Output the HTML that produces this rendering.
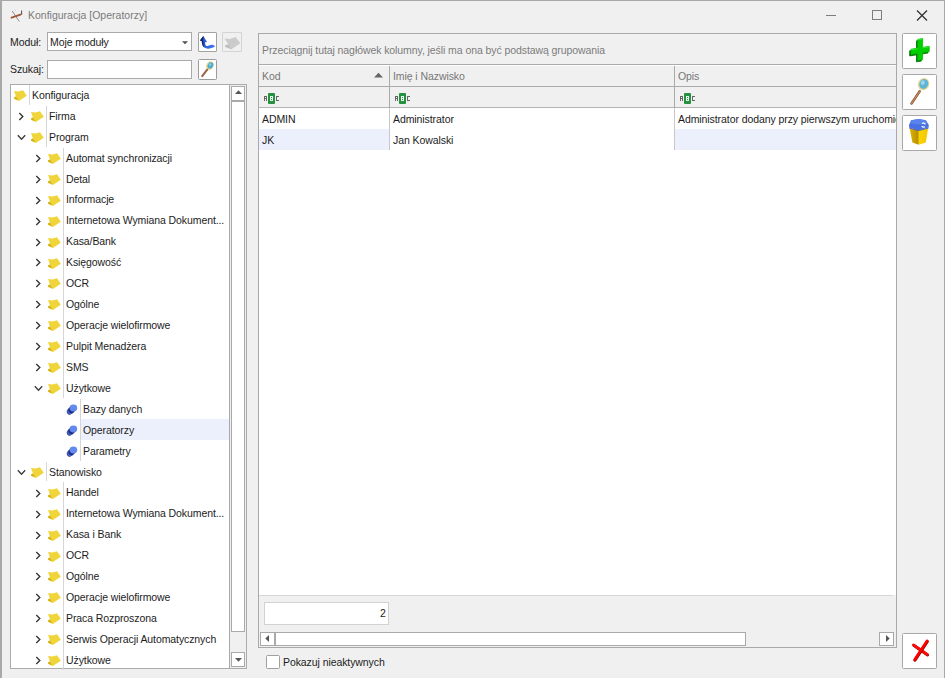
<!DOCTYPE html>
<html><head><meta charset="utf-8">
<style>
*{box-sizing:border-box}
html,body{margin:0;padding:0;width:945px;height:678px;overflow:hidden;background:#f0f0f0}
body{position:relative;font-family:"Liberation Sans",sans-serif;font-size:10.5px;color:#1c1c1c}
.abs{position:absolute}
.abs svg{display:block}
.tt{position:absolute;height:21px;line-height:21px;white-space:nowrap;color:#1c1c1c;letter-spacing:-0.09px}
.vl{position:absolute;width:1px;background:#d6d6d6}
.sel{position:absolute;width:148px;height:21px;background:#ebf0fc}
.lbl{position:absolute;white-space:nowrap;line-height:14px;letter-spacing:-0.08px}
.box{position:absolute;background:#fff;border:1px solid #a9a9a9}
.btn{position:absolute;background:#fff;border:1px solid #a8a8a8;border-radius:1.5px}
</style></head><body>
<!-- window borders -->
<div class="abs" style="left:0;top:0;width:945px;height:1px;background:#a7a7a7"></div>
<div class="abs" style="left:0;top:0;width:2px;height:678px;background:#a9a9a9"></div>
<div class="abs" style="left:944px;top:0;width:1px;height:678px;background:#a9a9a9"></div>

<!-- title -->
<div class="abs" style="left:9px;top:7px"><svg width="16" height="17" viewBox="0 0 16 17"><path d="M3.2 4 L10.3 14.5" stroke="#8c8c8c" stroke-width="1"/><path d="M2.6 10.6 L11.4 7.6" stroke="#9e5a36" stroke-width="2" stroke-linecap="round"/><path d="M12.6 3.6 L12.6 7.8" stroke="#5a5a5a" stroke-width="1.1"/><path d="M5.8 2.8 L6.4 3.4" stroke="#a0a0a0" stroke-width="1"/></svg></div>
<div class="lbl" style="left:28px;top:8px;color:#7b7b7b;letter-spacing:0">Konfiguracja [Operatorzy]</div>
<div class="abs" style="left:826px;top:15px;width:10px;height:1px;background:#7c7c7c"></div>
<div class="abs" style="left:872px;top:10px;width:9.5px;height:10px;border:1px solid #7c7c7c;border-radius:0.5px"></div>
<div class="abs" style="left:916px;top:10px"><svg width="12" height="11" viewBox="0 0 12 11"><path d="M1 0.5 L11 10.5 M11 0.5 L1 10.5" stroke="#2e2e2e" stroke-width="1.2"/></svg></div>

<!-- module / search -->
<div class="lbl" style="left:10px;top:35px;color:#1c1c1c">Moduł:</div>
<div class="box" style="left:47px;top:32px;width:145px;height:19px"></div>
<div class="lbl" style="left:50px;top:35px">Moje moduły</div>
<div class="abs" style="left:182px;top:41px"><svg width="6" height="4" viewBox="0 0 6 4"><path d="M0 0.3 L6 0.3 L3 3.3 Z" fill="#505050"/></svg></div>
<div class="btn" style="left:198px;top:32px;width:19px;height:20px;border-color:#a2a2a2;border-radius:1px"></div>
<div class="abs" style="left:198px;top:33px"><svg width="19" height="19" viewBox="0 0 19 19"><defs><linearGradient id="ga" x1="0" y1="0" x2="1" y2="0"><stop offset="0" stop-color="#10267a"/><stop offset="0.35" stop-color="#2f66e0"/><stop offset="1" stop-color="#3f78f0"/></linearGradient></defs><path d="M5.3 2.9 L1.9 7.6 L3.7 8.1 C3.9 11 4.6 13.6 6.4 14.6 C7.8 15.6 9.6 15.9 11.2 15.5 C13.4 15 15.4 14.4 17 13.4 C16.2 12 14.6 11.5 13.2 11.8 C11.4 12.3 9.8 13.2 8.6 13.1 C7.6 12.8 7.2 11.2 7.0 9.0 L9.2 9.3 Z" fill="url(#ga)"/><path d="M5.3 2.9 L1.9 7.6 L3.7 8.1 C3.9 11 4.6 13.6 6.4 14.6 C5.6 13 5.3 11 5.3 8.6 L4.6 7.4 L5.6 3.4 Z" fill="#0a1650" opacity="0.7"/></svg></div>
<div class="btn" style="left:222px;top:32px;width:20px;height:20px;background:#f0f0f0;border-color:#d4d4d4;border-radius:1px"></div>
<div class="abs" style="left:222px;top:32px"><svg width="20" height="20" viewBox="0 0 17 15"><path d="M2.2 4.6 L6.8 5.0 L11.6 3.3 L15.6 8.6 L8.0 13.6 L2.6 11.6 L2.8 10.2 L5.4 9.6 Z" fill="#cbcbcb"/><path d="M2.8 10.2 L5.4 9.6 L8.0 13.6 L2.6 11.6 Z" fill="#bfbfbf"/></svg></div>

<div class="lbl" style="left:10px;top:62px;color:#1c1c1c">Szukaj:</div>
<div class="box" style="left:47px;top:60px;width:145px;height:19px"></div>
<div class="btn" style="left:198px;top:59px;width:19px;height:21px;border-color:#9c9c9c"></div>
<div class="abs" style="left:200px;top:61px"><svg width="16" height="17" viewBox="0 0 16 17"><path d="M2.2 15.2 L7.6 8.2" stroke="#9c5e3c" stroke-width="1.9" stroke-linecap="round"/><ellipse cx="10" cy="4.5" rx="3.5" ry="4.2" transform="rotate(28 10 4.5)" fill="#e2cf82"/><ellipse cx="10.5" cy="4.4" rx="2.6" ry="3.3" transform="rotate(28 10.5 4.4)" fill="#48acd6"/><ellipse cx="10.2" cy="3.6" rx="1.1" ry="1.5" transform="rotate(28 10.2 3.6)" fill="#8ccfe8"/></svg></div>

<!-- tree -->
<div class="box" style="left:10px;top:84px;width:237px;height:585px;border-color:#ababab"></div>
<div class="abs" style="left:11.0px;top:87.07px"><svg class="ic" width="17" height="15" viewBox="0 0 17 15"><path d="M3.0 4.0 L7.5 4.6 L12.0 3.3 L15.8 8.7 L7.9 13.9 L3.1 11.8 L3.2 10.2 L5.0 9.6 Z" fill="#f0d53a"/><path d="M3.2 10.2 L5.0 9.6 L7.4 13.6 L3.1 11.8 Z" fill="#d2b31e"/></svg></div>
<div class="tt" style="left:32px;top:84.80px">Konfiguracja</div>
<div class="abs" style="left:17.5px;top:111.93px"><svg class="ex" width="7" height="9" viewBox="0 0 7 9"><path d="M1.3 1.1 L4.8 4.5 L1.3 7.9" fill="none" stroke="#383838" stroke-width="1.4"/></svg></div>
<div class="abs" style="left:28.0px;top:108.00px"><svg class="ic" width="17" height="15" viewBox="0 0 17 15"><path d="M3.0 4.0 L7.5 4.6 L12.0 3.3 L15.8 8.7 L7.9 13.9 L3.1 11.8 L3.2 10.2 L5.0 9.6 Z" fill="#f0d53a"/><path d="M3.2 10.2 L5.0 9.6 L7.4 13.6 L3.1 11.8 Z" fill="#d2b31e"/></svg></div>
<div class="tt" style="left:49px;top:105.73px">Firma</div>
<div class="abs" style="left:17.0px;top:133.86px"><svg class="ex" width="9" height="7" viewBox="0 0 9 7"><path d="M0.8 1.2 L4.5 5.2 L8.2 1.2" fill="none" stroke="#3c3c3c" stroke-width="1.35"/></svg></div>
<div class="abs" style="left:28.0px;top:128.93px"><svg class="ic" width="17" height="15" viewBox="0 0 17 15"><path d="M3.0 4.0 L7.5 4.6 L12.0 3.3 L15.8 8.7 L7.9 13.9 L3.1 11.8 L3.2 10.2 L5.0 9.6 Z" fill="#f0d53a"/><path d="M3.2 10.2 L5.0 9.6 L7.4 13.6 L3.1 11.8 Z" fill="#d2b31e"/></svg></div>
<div class="tt" style="left:49px;top:126.66px">Program</div>
<div class="abs" style="left:34.5px;top:153.79px"><svg class="ex" width="7" height="9" viewBox="0 0 7 9"><path d="M1.3 1.1 L4.8 4.5 L1.3 7.9" fill="none" stroke="#383838" stroke-width="1.4"/></svg></div>
<div class="abs" style="left:45.0px;top:149.86px"><svg class="ic" width="17" height="15" viewBox="0 0 17 15"><path d="M3.0 4.0 L7.5 4.6 L12.0 3.3 L15.8 8.7 L7.9 13.9 L3.1 11.8 L3.2 10.2 L5.0 9.6 Z" fill="#f0d53a"/><path d="M3.2 10.2 L5.0 9.6 L7.4 13.6 L3.1 11.8 Z" fill="#d2b31e"/></svg></div>
<div class="tt" style="left:66px;top:147.59px">Automat synchronizacji</div>
<div class="abs" style="left:34.5px;top:174.72px"><svg class="ex" width="7" height="9" viewBox="0 0 7 9"><path d="M1.3 1.1 L4.8 4.5 L1.3 7.9" fill="none" stroke="#383838" stroke-width="1.4"/></svg></div>
<div class="abs" style="left:45.0px;top:170.79px"><svg class="ic" width="17" height="15" viewBox="0 0 17 15"><path d="M3.0 4.0 L7.5 4.6 L12.0 3.3 L15.8 8.7 L7.9 13.9 L3.1 11.8 L3.2 10.2 L5.0 9.6 Z" fill="#f0d53a"/><path d="M3.2 10.2 L5.0 9.6 L7.4 13.6 L3.1 11.8 Z" fill="#d2b31e"/></svg></div>
<div class="tt" style="left:66px;top:168.52px">Detal</div>
<div class="abs" style="left:34.5px;top:195.65px"><svg class="ex" width="7" height="9" viewBox="0 0 7 9"><path d="M1.3 1.1 L4.8 4.5 L1.3 7.9" fill="none" stroke="#383838" stroke-width="1.4"/></svg></div>
<div class="abs" style="left:45.0px;top:191.72px"><svg class="ic" width="17" height="15" viewBox="0 0 17 15"><path d="M3.0 4.0 L7.5 4.6 L12.0 3.3 L15.8 8.7 L7.9 13.9 L3.1 11.8 L3.2 10.2 L5.0 9.6 Z" fill="#f0d53a"/><path d="M3.2 10.2 L5.0 9.6 L7.4 13.6 L3.1 11.8 Z" fill="#d2b31e"/></svg></div>
<div class="tt" style="left:66px;top:189.45px">Informacje</div>
<div class="abs" style="left:34.5px;top:216.58px"><svg class="ex" width="7" height="9" viewBox="0 0 7 9"><path d="M1.3 1.1 L4.8 4.5 L1.3 7.9" fill="none" stroke="#383838" stroke-width="1.4"/></svg></div>
<div class="abs" style="left:45.0px;top:212.65px"><svg class="ic" width="17" height="15" viewBox="0 0 17 15"><path d="M3.0 4.0 L7.5 4.6 L12.0 3.3 L15.8 8.7 L7.9 13.9 L3.1 11.8 L3.2 10.2 L5.0 9.6 Z" fill="#f0d53a"/><path d="M3.2 10.2 L5.0 9.6 L7.4 13.6 L3.1 11.8 Z" fill="#d2b31e"/></svg></div>
<div class="tt" style="left:66px;top:210.38px">Internetowa Wymiana Dokument...</div>
<div class="abs" style="left:34.5px;top:237.51px"><svg class="ex" width="7" height="9" viewBox="0 0 7 9"><path d="M1.3 1.1 L4.8 4.5 L1.3 7.9" fill="none" stroke="#383838" stroke-width="1.4"/></svg></div>
<div class="abs" style="left:45.0px;top:233.58px"><svg class="ic" width="17" height="15" viewBox="0 0 17 15"><path d="M3.0 4.0 L7.5 4.6 L12.0 3.3 L15.8 8.7 L7.9 13.9 L3.1 11.8 L3.2 10.2 L5.0 9.6 Z" fill="#f0d53a"/><path d="M3.2 10.2 L5.0 9.6 L7.4 13.6 L3.1 11.8 Z" fill="#d2b31e"/></svg></div>
<div class="tt" style="left:66px;top:231.31px">Kasa/Bank</div>
<div class="abs" style="left:34.5px;top:258.44px"><svg class="ex" width="7" height="9" viewBox="0 0 7 9"><path d="M1.3 1.1 L4.8 4.5 L1.3 7.9" fill="none" stroke="#383838" stroke-width="1.4"/></svg></div>
<div class="abs" style="left:45.0px;top:254.51px"><svg class="ic" width="17" height="15" viewBox="0 0 17 15"><path d="M3.0 4.0 L7.5 4.6 L12.0 3.3 L15.8 8.7 L7.9 13.9 L3.1 11.8 L3.2 10.2 L5.0 9.6 Z" fill="#f0d53a"/><path d="M3.2 10.2 L5.0 9.6 L7.4 13.6 L3.1 11.8 Z" fill="#d2b31e"/></svg></div>
<div class="tt" style="left:66px;top:252.24px">Księgowość</div>
<div class="abs" style="left:34.5px;top:279.37px"><svg class="ex" width="7" height="9" viewBox="0 0 7 9"><path d="M1.3 1.1 L4.8 4.5 L1.3 7.9" fill="none" stroke="#383838" stroke-width="1.4"/></svg></div>
<div class="abs" style="left:45.0px;top:275.44px"><svg class="ic" width="17" height="15" viewBox="0 0 17 15"><path d="M3.0 4.0 L7.5 4.6 L12.0 3.3 L15.8 8.7 L7.9 13.9 L3.1 11.8 L3.2 10.2 L5.0 9.6 Z" fill="#f0d53a"/><path d="M3.2 10.2 L5.0 9.6 L7.4 13.6 L3.1 11.8 Z" fill="#d2b31e"/></svg></div>
<div class="tt" style="left:66px;top:273.17px">OCR</div>
<div class="abs" style="left:34.5px;top:300.30px"><svg class="ex" width="7" height="9" viewBox="0 0 7 9"><path d="M1.3 1.1 L4.8 4.5 L1.3 7.9" fill="none" stroke="#383838" stroke-width="1.4"/></svg></div>
<div class="abs" style="left:45.0px;top:296.37px"><svg class="ic" width="17" height="15" viewBox="0 0 17 15"><path d="M3.0 4.0 L7.5 4.6 L12.0 3.3 L15.8 8.7 L7.9 13.9 L3.1 11.8 L3.2 10.2 L5.0 9.6 Z" fill="#f0d53a"/><path d="M3.2 10.2 L5.0 9.6 L7.4 13.6 L3.1 11.8 Z" fill="#d2b31e"/></svg></div>
<div class="tt" style="left:66px;top:294.10px">Ogólne</div>
<div class="abs" style="left:34.5px;top:321.23px"><svg class="ex" width="7" height="9" viewBox="0 0 7 9"><path d="M1.3 1.1 L4.8 4.5 L1.3 7.9" fill="none" stroke="#383838" stroke-width="1.4"/></svg></div>
<div class="abs" style="left:45.0px;top:317.30px"><svg class="ic" width="17" height="15" viewBox="0 0 17 15"><path d="M3.0 4.0 L7.5 4.6 L12.0 3.3 L15.8 8.7 L7.9 13.9 L3.1 11.8 L3.2 10.2 L5.0 9.6 Z" fill="#f0d53a"/><path d="M3.2 10.2 L5.0 9.6 L7.4 13.6 L3.1 11.8 Z" fill="#d2b31e"/></svg></div>
<div class="tt" style="left:66px;top:315.03px">Operacje wielofirmowe</div>
<div class="abs" style="left:34.5px;top:342.16px"><svg class="ex" width="7" height="9" viewBox="0 0 7 9"><path d="M1.3 1.1 L4.8 4.5 L1.3 7.9" fill="none" stroke="#383838" stroke-width="1.4"/></svg></div>
<div class="abs" style="left:45.0px;top:338.23px"><svg class="ic" width="17" height="15" viewBox="0 0 17 15"><path d="M3.0 4.0 L7.5 4.6 L12.0 3.3 L15.8 8.7 L7.9 13.9 L3.1 11.8 L3.2 10.2 L5.0 9.6 Z" fill="#f0d53a"/><path d="M3.2 10.2 L5.0 9.6 L7.4 13.6 L3.1 11.8 Z" fill="#d2b31e"/></svg></div>
<div class="tt" style="left:66px;top:335.96px">Pulpit Menadżera</div>
<div class="abs" style="left:34.5px;top:363.09px"><svg class="ex" width="7" height="9" viewBox="0 0 7 9"><path d="M1.3 1.1 L4.8 4.5 L1.3 7.9" fill="none" stroke="#383838" stroke-width="1.4"/></svg></div>
<div class="abs" style="left:45.0px;top:359.16px"><svg class="ic" width="17" height="15" viewBox="0 0 17 15"><path d="M3.0 4.0 L7.5 4.6 L12.0 3.3 L15.8 8.7 L7.9 13.9 L3.1 11.8 L3.2 10.2 L5.0 9.6 Z" fill="#f0d53a"/><path d="M3.2 10.2 L5.0 9.6 L7.4 13.6 L3.1 11.8 Z" fill="#d2b31e"/></svg></div>
<div class="tt" style="left:66px;top:356.89px">SMS</div>
<div class="abs" style="left:34.0px;top:385.02px"><svg class="ex" width="9" height="7" viewBox="0 0 9 7"><path d="M0.8 1.2 L4.5 5.2 L8.2 1.2" fill="none" stroke="#3c3c3c" stroke-width="1.35"/></svg></div>
<div class="abs" style="left:45.0px;top:380.09px"><svg class="ic" width="17" height="15" viewBox="0 0 17 15"><path d="M3.0 4.0 L7.5 4.6 L12.0 3.3 L15.8 8.7 L7.9 13.9 L3.1 11.8 L3.2 10.2 L5.0 9.6 Z" fill="#f0d53a"/><path d="M3.2 10.2 L5.0 9.6 L7.4 13.6 L3.1 11.8 Z" fill="#d2b31e"/></svg></div>
<div class="tt" style="left:66px;top:377.82px">Użytkowe</div>
<div class="abs" style="left:64.0px;top:398.95px"><svg class="ic" width="16" height="17" viewBox="0 0 16 17"><ellipse cx="6.4" cy="12.2" rx="3.8" ry="3.0" transform="rotate(-38 6.4 12.2)" fill="#13206a"/><ellipse cx="6.9" cy="11.6" rx="3.9" ry="3.1" transform="rotate(-38 6.9 11.6)" fill="#4a6ad8"/><ellipse cx="8.0" cy="10.5" rx="3.9" ry="3.2" transform="rotate(-38 8.0 10.5)" fill="#1f2e80"/><ellipse cx="9.4" cy="9.0" rx="3.8" ry="3.4" fill="#6388ee"/></svg></div>
<div class="tt" style="left:83px;top:398.75px">Bazy danych</div>
<div class="sel" style="top:419.08px;left:81px"></div>
<div class="abs" style="left:64.0px;top:419.88px"><svg class="ic" width="16" height="17" viewBox="0 0 16 17"><ellipse cx="6.4" cy="12.2" rx="3.8" ry="3.0" transform="rotate(-38 6.4 12.2)" fill="#13206a"/><ellipse cx="6.9" cy="11.6" rx="3.9" ry="3.1" transform="rotate(-38 6.9 11.6)" fill="#4a6ad8"/><ellipse cx="8.0" cy="10.5" rx="3.9" ry="3.2" transform="rotate(-38 8.0 10.5)" fill="#1f2e80"/><ellipse cx="9.4" cy="9.0" rx="3.8" ry="3.4" fill="#6388ee"/></svg></div>
<div class="tt" style="left:83px;top:419.68px">Operatorzy</div>
<div class="abs" style="left:64.0px;top:440.81px"><svg class="ic" width="16" height="17" viewBox="0 0 16 17"><ellipse cx="6.4" cy="12.2" rx="3.8" ry="3.0" transform="rotate(-38 6.4 12.2)" fill="#13206a"/><ellipse cx="6.9" cy="11.6" rx="3.9" ry="3.1" transform="rotate(-38 6.9 11.6)" fill="#4a6ad8"/><ellipse cx="8.0" cy="10.5" rx="3.9" ry="3.2" transform="rotate(-38 8.0 10.5)" fill="#1f2e80"/><ellipse cx="9.4" cy="9.0" rx="3.8" ry="3.4" fill="#6388ee"/></svg></div>
<div class="tt" style="left:83px;top:440.61px">Parametry</div>
<div class="abs" style="left:17.0px;top:468.74px"><svg class="ex" width="9" height="7" viewBox="0 0 9 7"><path d="M0.8 1.2 L4.5 5.2 L8.2 1.2" fill="none" stroke="#3c3c3c" stroke-width="1.35"/></svg></div>
<div class="abs" style="left:28.0px;top:463.81px"><svg class="ic" width="17" height="15" viewBox="0 0 17 15"><path d="M3.0 4.0 L7.5 4.6 L12.0 3.3 L15.8 8.7 L7.9 13.9 L3.1 11.8 L3.2 10.2 L5.0 9.6 Z" fill="#f0d53a"/><path d="M3.2 10.2 L5.0 9.6 L7.4 13.6 L3.1 11.8 Z" fill="#d2b31e"/></svg></div>
<div class="tt" style="left:49px;top:461.54px">Stanowisko</div>
<div class="abs" style="left:34.5px;top:488.67px"><svg class="ex" width="7" height="9" viewBox="0 0 7 9"><path d="M1.3 1.1 L4.8 4.5 L1.3 7.9" fill="none" stroke="#383838" stroke-width="1.4"/></svg></div>
<div class="abs" style="left:45.0px;top:484.74px"><svg class="ic" width="17" height="15" viewBox="0 0 17 15"><path d="M3.0 4.0 L7.5 4.6 L12.0 3.3 L15.8 8.7 L7.9 13.9 L3.1 11.8 L3.2 10.2 L5.0 9.6 Z" fill="#f0d53a"/><path d="M3.2 10.2 L5.0 9.6 L7.4 13.6 L3.1 11.8 Z" fill="#d2b31e"/></svg></div>
<div class="tt" style="left:66px;top:482.47px">Handel</div>
<div class="abs" style="left:34.5px;top:509.60px"><svg class="ex" width="7" height="9" viewBox="0 0 7 9"><path d="M1.3 1.1 L4.8 4.5 L1.3 7.9" fill="none" stroke="#383838" stroke-width="1.4"/></svg></div>
<div class="abs" style="left:45.0px;top:505.67px"><svg class="ic" width="17" height="15" viewBox="0 0 17 15"><path d="M3.0 4.0 L7.5 4.6 L12.0 3.3 L15.8 8.7 L7.9 13.9 L3.1 11.8 L3.2 10.2 L5.0 9.6 Z" fill="#f0d53a"/><path d="M3.2 10.2 L5.0 9.6 L7.4 13.6 L3.1 11.8 Z" fill="#d2b31e"/></svg></div>
<div class="tt" style="left:66px;top:503.40px">Internetowa Wymiana Dokument...</div>
<div class="abs" style="left:34.5px;top:530.53px"><svg class="ex" width="7" height="9" viewBox="0 0 7 9"><path d="M1.3 1.1 L4.8 4.5 L1.3 7.9" fill="none" stroke="#383838" stroke-width="1.4"/></svg></div>
<div class="abs" style="left:45.0px;top:526.60px"><svg class="ic" width="17" height="15" viewBox="0 0 17 15"><path d="M3.0 4.0 L7.5 4.6 L12.0 3.3 L15.8 8.7 L7.9 13.9 L3.1 11.8 L3.2 10.2 L5.0 9.6 Z" fill="#f0d53a"/><path d="M3.2 10.2 L5.0 9.6 L7.4 13.6 L3.1 11.8 Z" fill="#d2b31e"/></svg></div>
<div class="tt" style="left:66px;top:524.33px">Kasa i Bank</div>
<div class="abs" style="left:34.5px;top:551.46px"><svg class="ex" width="7" height="9" viewBox="0 0 7 9"><path d="M1.3 1.1 L4.8 4.5 L1.3 7.9" fill="none" stroke="#383838" stroke-width="1.4"/></svg></div>
<div class="abs" style="left:45.0px;top:547.53px"><svg class="ic" width="17" height="15" viewBox="0 0 17 15"><path d="M3.0 4.0 L7.5 4.6 L12.0 3.3 L15.8 8.7 L7.9 13.9 L3.1 11.8 L3.2 10.2 L5.0 9.6 Z" fill="#f0d53a"/><path d="M3.2 10.2 L5.0 9.6 L7.4 13.6 L3.1 11.8 Z" fill="#d2b31e"/></svg></div>
<div class="tt" style="left:66px;top:545.26px">OCR</div>
<div class="abs" style="left:34.5px;top:572.39px"><svg class="ex" width="7" height="9" viewBox="0 0 7 9"><path d="M1.3 1.1 L4.8 4.5 L1.3 7.9" fill="none" stroke="#383838" stroke-width="1.4"/></svg></div>
<div class="abs" style="left:45.0px;top:568.46px"><svg class="ic" width="17" height="15" viewBox="0 0 17 15"><path d="M3.0 4.0 L7.5 4.6 L12.0 3.3 L15.8 8.7 L7.9 13.9 L3.1 11.8 L3.2 10.2 L5.0 9.6 Z" fill="#f0d53a"/><path d="M3.2 10.2 L5.0 9.6 L7.4 13.6 L3.1 11.8 Z" fill="#d2b31e"/></svg></div>
<div class="tt" style="left:66px;top:566.19px">Ogólne</div>
<div class="abs" style="left:34.5px;top:593.32px"><svg class="ex" width="7" height="9" viewBox="0 0 7 9"><path d="M1.3 1.1 L4.8 4.5 L1.3 7.9" fill="none" stroke="#383838" stroke-width="1.4"/></svg></div>
<div class="abs" style="left:45.0px;top:589.39px"><svg class="ic" width="17" height="15" viewBox="0 0 17 15"><path d="M3.0 4.0 L7.5 4.6 L12.0 3.3 L15.8 8.7 L7.9 13.9 L3.1 11.8 L3.2 10.2 L5.0 9.6 Z" fill="#f0d53a"/><path d="M3.2 10.2 L5.0 9.6 L7.4 13.6 L3.1 11.8 Z" fill="#d2b31e"/></svg></div>
<div class="tt" style="left:66px;top:587.12px">Operacje wielofirmowe</div>
<div class="abs" style="left:34.5px;top:614.25px"><svg class="ex" width="7" height="9" viewBox="0 0 7 9"><path d="M1.3 1.1 L4.8 4.5 L1.3 7.9" fill="none" stroke="#383838" stroke-width="1.4"/></svg></div>
<div class="abs" style="left:45.0px;top:610.32px"><svg class="ic" width="17" height="15" viewBox="0 0 17 15"><path d="M3.0 4.0 L7.5 4.6 L12.0 3.3 L15.8 8.7 L7.9 13.9 L3.1 11.8 L3.2 10.2 L5.0 9.6 Z" fill="#f0d53a"/><path d="M3.2 10.2 L5.0 9.6 L7.4 13.6 L3.1 11.8 Z" fill="#d2b31e"/></svg></div>
<div class="tt" style="left:66px;top:608.05px">Praca Rozproszona</div>
<div class="abs" style="left:34.5px;top:635.18px"><svg class="ex" width="7" height="9" viewBox="0 0 7 9"><path d="M1.3 1.1 L4.8 4.5 L1.3 7.9" fill="none" stroke="#383838" stroke-width="1.4"/></svg></div>
<div class="abs" style="left:45.0px;top:631.25px"><svg class="ic" width="17" height="15" viewBox="0 0 17 15"><path d="M3.0 4.0 L7.5 4.6 L12.0 3.3 L15.8 8.7 L7.9 13.9 L3.1 11.8 L3.2 10.2 L5.0 9.6 Z" fill="#f0d53a"/><path d="M3.2 10.2 L5.0 9.6 L7.4 13.6 L3.1 11.8 Z" fill="#d2b31e"/></svg></div>
<div class="tt" style="left:66px;top:628.98px">Serwis Operacji Automatycznych</div>
<div class="abs" style="left:34.5px;top:656.11px"><svg class="ex" width="7" height="9" viewBox="0 0 7 9"><path d="M1.3 1.1 L4.8 4.5 L1.3 7.9" fill="none" stroke="#383838" stroke-width="1.4"/></svg></div>
<div class="abs" style="left:45.0px;top:652.18px"><svg class="ic" width="17" height="15" viewBox="0 0 17 15"><path d="M3.0 4.0 L7.5 4.6 L12.0 3.3 L15.8 8.7 L7.9 13.9 L3.1 11.8 L3.2 10.2 L5.0 9.6 Z" fill="#f0d53a"/><path d="M3.2 10.2 L5.0 9.6 L7.4 13.6 L3.1 11.8 Z" fill="#d2b31e"/></svg></div>
<div class="tt" style="left:66px;top:649.91px">Użytkowe</div>
<div class="vl" style="left:29px;top:84.80px;height:19.93px"></div>
<div class="vl" style="left:46px;top:105.73px;height:40.86px"></div>
<div class="vl" style="left:63px;top:147.59px;height:250.16px"></div>
<div class="vl" style="left:80px;top:398.75px;height:61.79px"></div>
<div class="vl" style="left:46px;top:461.54px;height:19.93px"></div>
<div class="vl" style="left:63px;top:482.47px;height:187.37px"></div>
<!-- tree scrollbar -->
<div class="abs" style="left:229px;top:85px;width:17px;height:583px;background:#f0f0f0;border-left:1px solid #a9a9a9"></div>
<div class="abs" style="left:231px;top:86px;width:14px;height:15px;background:#fff;border:1px solid #a9a9a9"></div>
<div class="abs" style="left:235px;top:90px"><svg width="7" height="4" viewBox="0 0 7 4"><path d="M0 4 L7 4 L3.5 0.3 Z" fill="#555"/></svg></div>
<div class="abs" style="left:231px;top:101px;width:14px;height:531px;background:#fff;border:1px solid #a9a9a9"></div>
<div class="abs" style="left:231px;top:652px;width:14px;height:15px;background:#fff;border:1px solid #a9a9a9"></div>
<div class="abs" style="left:235px;top:658px"><svg width="7" height="4" viewBox="0 0 7 4"><path d="M0 0 L7 0 L3.5 3.7 Z" fill="#555"/></svg></div>

<!-- grid -->
<div class="abs" style="left:258px;top:33px;width:639px;height:615px;border:1px solid #a9a9a9;background:#fff"></div>
<div class="abs" style="left:259px;top:34px;width:637px;height:31px;background:#f0f0f0;border-bottom:1px solid #aaaaaa"></div>
<div class="lbl" style="left:262px;top:43px;color:#7c7c7c">Przeciągnij tutaj nagłówek kolumny, jeśli ma ona być podstawą grupowania</div>

<!-- header row -->
<div class="abs" style="left:259px;top:66px;width:637px;height:21px;background:#f0f0f0;border-bottom:1px solid #aaaaaa"></div>
<div class="abs" style="left:389px;top:66px;width:1px;height:21px;background:#aaaaaa"></div>
<div class="abs" style="left:674px;top:66px;width:1px;height:21px;background:#aaaaaa"></div>
<div class="lbl" style="left:262px;top:69px;color:#767676">Kod</div>
<div class="abs" style="left:374px;top:72px"><svg width="9" height="6" viewBox="0 0 9 6"><path d="M0 5.6 L9 5.6 L4.5 0.7 Z" fill="#666"/></svg></div>
<div class="lbl" style="left:393px;top:69px;color:#767676">Imię i Nazwisko</div>
<div class="lbl" style="left:678px;top:69px;color:#767676">Opis</div>
<!-- filter row -->
<div class="abs" style="left:259px;top:87px;width:637px;height:21px;background:#f0f0f0;border-bottom:1px solid #b4b4b4"></div>
<div class="abs" style="left:389px;top:87px;width:1px;height:21px;background:#aaaaaa"></div>
<div class="abs" style="left:674px;top:87px;width:1px;height:21px;background:#aaaaaa"></div>
<div class="abs" style="left:263px;top:93px"><svg width="17" height="11" viewBox="0 0 17 11" shape-rendering="crispEdges"><rect x="1" y="3" width="1" height="1" fill="#666"/><rect x="2" y="3" width="1" height="1" fill="#666"/><rect x="3" y="3" width="1" height="1" fill="#666"/><rect x="1" y="4" width="1" height="1" fill="#666"/><rect x="3" y="4" width="1" height="1" fill="#666"/><rect x="1" y="5" width="1" height="1" fill="#666"/><rect x="2" y="5" width="1" height="1" fill="#666"/><rect x="3" y="5" width="1" height="1" fill="#666"/><rect x="1" y="6" width="1" height="1" fill="#666"/><rect x="3" y="6" width="1" height="1" fill="#666"/><rect x="1" y="7" width="1" height="1" fill="#666"/><rect x="3" y="7" width="1" height="1" fill="#666"/><rect x="5" y="0" width="7" height="11" rx="1" fill="#25923f" shape-rendering="auto"/><rect x="7" y="3" width="1" height="1" fill="#eef5ee"/><rect x="8" y="3" width="1" height="1" fill="#eef5ee"/><rect x="9" y="3" width="1" height="1" fill="#eef5ee"/><rect x="7" y="4" width="1" height="1" fill="#eef5ee"/><rect x="9" y="4" width="1" height="1" fill="#eef5ee"/><rect x="7" y="5" width="1" height="1" fill="#eef5ee"/><rect x="8" y="5" width="1" height="1" fill="#eef5ee"/><rect x="9" y="5" width="1" height="1" fill="#eef5ee"/><rect x="7" y="6" width="1" height="1" fill="#eef5ee"/><rect x="9" y="6" width="1" height="1" fill="#eef5ee"/><rect x="7" y="7" width="1" height="1" fill="#eef5ee"/><rect x="8" y="7" width="1" height="1" fill="#eef5ee"/><rect x="9" y="7" width="1" height="1" fill="#eef5ee"/><rect x="13" y="3" width="1" height="1" fill="#666"/><rect x="14" y="3" width="1" height="1" fill="#666"/><rect x="15" y="3" width="1" height="1" fill="#666"/><rect x="13" y="4" width="1" height="1" fill="#666"/><rect x="13" y="5" width="1" height="1" fill="#666"/><rect x="13" y="6" width="1" height="1" fill="#666"/><rect x="13" y="7" width="1" height="1" fill="#666"/><rect x="14" y="7" width="1" height="1" fill="#666"/><rect x="15" y="7" width="1" height="1" fill="#666"/></svg></div><div class="abs" style="left:394px;top:93px"><svg width="17" height="11" viewBox="0 0 17 11" shape-rendering="crispEdges"><rect x="1" y="3" width="1" height="1" fill="#666"/><rect x="2" y="3" width="1" height="1" fill="#666"/><rect x="3" y="3" width="1" height="1" fill="#666"/><rect x="1" y="4" width="1" height="1" fill="#666"/><rect x="3" y="4" width="1" height="1" fill="#666"/><rect x="1" y="5" width="1" height="1" fill="#666"/><rect x="2" y="5" width="1" height="1" fill="#666"/><rect x="3" y="5" width="1" height="1" fill="#666"/><rect x="1" y="6" width="1" height="1" fill="#666"/><rect x="3" y="6" width="1" height="1" fill="#666"/><rect x="1" y="7" width="1" height="1" fill="#666"/><rect x="3" y="7" width="1" height="1" fill="#666"/><rect x="5" y="0" width="7" height="11" rx="1" fill="#25923f" shape-rendering="auto"/><rect x="7" y="3" width="1" height="1" fill="#eef5ee"/><rect x="8" y="3" width="1" height="1" fill="#eef5ee"/><rect x="9" y="3" width="1" height="1" fill="#eef5ee"/><rect x="7" y="4" width="1" height="1" fill="#eef5ee"/><rect x="9" y="4" width="1" height="1" fill="#eef5ee"/><rect x="7" y="5" width="1" height="1" fill="#eef5ee"/><rect x="8" y="5" width="1" height="1" fill="#eef5ee"/><rect x="9" y="5" width="1" height="1" fill="#eef5ee"/><rect x="7" y="6" width="1" height="1" fill="#eef5ee"/><rect x="9" y="6" width="1" height="1" fill="#eef5ee"/><rect x="7" y="7" width="1" height="1" fill="#eef5ee"/><rect x="8" y="7" width="1" height="1" fill="#eef5ee"/><rect x="9" y="7" width="1" height="1" fill="#eef5ee"/><rect x="13" y="3" width="1" height="1" fill="#666"/><rect x="14" y="3" width="1" height="1" fill="#666"/><rect x="15" y="3" width="1" height="1" fill="#666"/><rect x="13" y="4" width="1" height="1" fill="#666"/><rect x="13" y="5" width="1" height="1" fill="#666"/><rect x="13" y="6" width="1" height="1" fill="#666"/><rect x="13" y="7" width="1" height="1" fill="#666"/><rect x="14" y="7" width="1" height="1" fill="#666"/><rect x="15" y="7" width="1" height="1" fill="#666"/></svg></div><div class="abs" style="left:679px;top:93px"><svg width="17" height="11" viewBox="0 0 17 11" shape-rendering="crispEdges"><rect x="1" y="3" width="1" height="1" fill="#666"/><rect x="2" y="3" width="1" height="1" fill="#666"/><rect x="3" y="3" width="1" height="1" fill="#666"/><rect x="1" y="4" width="1" height="1" fill="#666"/><rect x="3" y="4" width="1" height="1" fill="#666"/><rect x="1" y="5" width="1" height="1" fill="#666"/><rect x="2" y="5" width="1" height="1" fill="#666"/><rect x="3" y="5" width="1" height="1" fill="#666"/><rect x="1" y="6" width="1" height="1" fill="#666"/><rect x="3" y="6" width="1" height="1" fill="#666"/><rect x="1" y="7" width="1" height="1" fill="#666"/><rect x="3" y="7" width="1" height="1" fill="#666"/><rect x="5" y="0" width="7" height="11" rx="1" fill="#25923f" shape-rendering="auto"/><rect x="7" y="3" width="1" height="1" fill="#eef5ee"/><rect x="8" y="3" width="1" height="1" fill="#eef5ee"/><rect x="9" y="3" width="1" height="1" fill="#eef5ee"/><rect x="7" y="4" width="1" height="1" fill="#eef5ee"/><rect x="9" y="4" width="1" height="1" fill="#eef5ee"/><rect x="7" y="5" width="1" height="1" fill="#eef5ee"/><rect x="8" y="5" width="1" height="1" fill="#eef5ee"/><rect x="9" y="5" width="1" height="1" fill="#eef5ee"/><rect x="7" y="6" width="1" height="1" fill="#eef5ee"/><rect x="9" y="6" width="1" height="1" fill="#eef5ee"/><rect x="7" y="7" width="1" height="1" fill="#eef5ee"/><rect x="8" y="7" width="1" height="1" fill="#eef5ee"/><rect x="9" y="7" width="1" height="1" fill="#eef5ee"/><rect x="13" y="3" width="1" height="1" fill="#666"/><rect x="14" y="3" width="1" height="1" fill="#666"/><rect x="15" y="3" width="1" height="1" fill="#666"/><rect x="13" y="4" width="1" height="1" fill="#666"/><rect x="13" y="5" width="1" height="1" fill="#666"/><rect x="13" y="6" width="1" height="1" fill="#666"/><rect x="13" y="7" width="1" height="1" fill="#666"/><rect x="14" y="7" width="1" height="1" fill="#666"/><rect x="15" y="7" width="1" height="1" fill="#666"/></svg></div>
<!-- data rows -->
<div class="abs" style="left:259px;top:129px;width:130px;height:21px;background:#ebf0fc"></div><div class="abs" style="left:675px;top:129px;width:221px;height:21px;background:#ebf0fc"></div>
<div class="abs" style="left:389px;top:108px;width:1px;height:42px;background:#c8c8c8"></div>
<div class="abs" style="left:674px;top:108px;width:1px;height:42px;background:#c8c8c8"></div>
<div class="lbl" style="left:262px;top:112px">ADMIN</div>
<div class="lbl" style="left:393px;top:112px">Administrator</div>
<div class="abs" style="left:675px;top:108px;width:221px;height:21px;overflow:hidden"><div class="lbl" style="left:3px;top:4px">Administrator dodany przy pierwszym uruchomieniu</div></div>
<div class="lbl" style="left:262px;top:133px">JK</div>
<div class="lbl" style="left:393px;top:133px">Jan Kowalski</div>
<!-- footer -->
<div class="abs" style="left:259px;top:595px;width:637px;height:36px;background:#f0f0f0"></div><div class="abs" style="left:259px;top:595px;width:634px;height:1px;background:#d6d6d6"></div>
<div class="abs" style="left:264px;top:602px;width:125px;height:23px;background:#fff;border:1px solid #d2d2d2"></div>
<div class="lbl" style="left:380px;top:606px">2</div>
<!-- h scrollbar -->
<div class="abs" style="left:259px;top:631px;width:637px;height:16px;background:#f0f0f0"></div>
<div class="abs" style="left:260px;top:632px;width:15px;height:14px;background:#fff;border:1px solid #a9a9a9"></div>
<div class="abs" style="left:265px;top:635px"><svg width="4" height="7" viewBox="0 0 4 7"><path d="M4 0 L4 7 L0.3 3.5 Z" fill="#555"/></svg></div>
<div class="abs" style="left:275px;top:632px;width:471px;height:14px;background:#fff;border:1px solid #a9a9a9"></div>
<div class="abs" style="left:879px;top:632px;width:15px;height:14px;background:#fff;border:1px solid #a9a9a9"></div>
<div class="abs" style="left:886px;top:635px"><svg width="4" height="7" viewBox="0 0 4 7"><path d="M0 0 L0 7 L3.7 3.5 Z" fill="#555"/></svg></div>
<!-- checkbox -->
<div class="abs" style="left:266px;top:655px;width:14px;height:14px;background:#fff;border:1px solid #a0a0a0;border-radius:1.5px"></div>
<div class="lbl" style="left:283px;top:655px">Pokazuj nieaktywnych</div>
<!-- right buttons -->
<div class="btn" style="left:902px;top:33px;width:35px;height:36px"></div>
<div class="abs" style="left:908px;top:37px"><svg width="24" height="28" viewBox="0 0 24 28"><g transform="translate(12 13) skewY(-9) translate(-12 -13)"><path transform="translate(-1.3 1.3)" d="M9.8 2 L14.6 2 L14.6 10.8 L21.2 10.8 L21.2 16 L14.6 16 L14.6 23 L9.8 23 L9.8 16 L3 16 L3 10.8 L9.8 10.8 Z" fill="#007000" stroke="#007000" stroke-width="0.8" stroke-linejoin="round"/><path d="M9.8 2 L14.6 2 L14.6 10.8 L21.2 10.8 L21.2 16 L14.6 16 L14.6 23 L9.8 23 L9.8 16 L3 16 L3 10.8 L9.8 10.8 Z" fill="#00cf00" stroke="#00c400" stroke-width="0.8" stroke-linejoin="round"/><path d="M9.8 2 L14.6 2 L14.6 3 L9.8 3 Z M3 10.8 L9.8 10.8 L9.8 11.8 L3 11.8 Z M14.6 10.8 L21.2 10.8 L21.2 11.8 L14.6 11.8 Z" fill="#36e836"/></g></svg></div>
<div class="btn" style="left:902px;top:74px;width:35px;height:36px"></div>
<div class="abs" style="left:905px;top:74px"><svg width="30" height="34" viewBox="0 0 30 34"><path d="M6.6 29.4 L14.6 17.4" stroke="#7a4a2a" stroke-width="2.6" stroke-linecap="round"/><path d="M6.6 29.4 L14.6 17.4" stroke="#c48a60" stroke-width="1.4" stroke-linecap="round"/><ellipse cx="18.6" cy="10.2" rx="5.6" ry="6.2" transform="rotate(25 18.6 10.2)" fill="#e9d78c"/><ellipse cx="18.8" cy="10" rx="4.4" ry="5" transform="rotate(25 18.8 10)" fill="#5cb4d8"/><ellipse cx="17.8" cy="8.6" rx="2" ry="2.4" transform="rotate(25 17.8 8.6)" fill="#9ad4ec"/></svg></div>
<div class="btn" style="left:902px;top:115px;width:35px;height:36px"></div>
<div class="abs" style="left:905px;top:116px"><svg width="28" height="32" viewBox="0 0 28 32"><defs><linearGradient id="gy" x1="0" y1="0" x2="1" y2="0"><stop offset="0" stop-color="#e0b400"/><stop offset="0.45" stop-color="#b89000"/><stop offset="0.5" stop-color="#fad200"/><stop offset="1" stop-color="#f4c800"/></linearGradient></defs><path d="M4.6 12 L13.7 13.6 L23.2 12 L20.8 26.4 L13.7 28.8 L7.4 26.4 Z" fill="url(#gy)"/><path d="M6.1 4.2 L13.7 3.1 L20.8 4.2 L23.8 9 L23.6 11.6 L13.7 14.2 L4.2 11.6 L4 9 Z" fill="#4870e2"/><path d="M6.1 4.2 L13.7 3.1 L20.8 4.2 L22.4 7.4 L13.7 8.6 L5.2 7.4 Z" fill="#5a82ec"/><path d="M4.2 11.6 L13.7 14.2 L23.6 11.6 L23.4 12.6 L13.7 15 L4.4 12.6 Z" fill="#3a5cc8"/><path d="M17 7.6 A2 2 0 0 1 20.2 8.4 M20 10.6 A2 2 0 0 1 16.8 10" fill="none" stroke="#fff" stroke-width="1.3"/></svg></div>
<div class="btn" style="left:902px;top:633px;width:35px;height:36px"></div>
<div class="abs" style="left:909px;top:638px"><svg width="22" height="26" viewBox="0 0 22 26"><path d="M5 7.6 L18.6 16.9" stroke="#8a0000" stroke-width="3" stroke-linecap="round"/><path d="M4.4 6.8 L18.2 16.4" stroke="#ff0a0a" stroke-width="2.7" stroke-linecap="round"/><path d="M18.4 3.4 L6 22.2" stroke="#8a0000" stroke-width="3" stroke-linecap="round"/><path d="M18 3 L5.6 21.8" stroke="#ff0000" stroke-width="2.7" stroke-linecap="round"/></svg></div>
</body></html>
